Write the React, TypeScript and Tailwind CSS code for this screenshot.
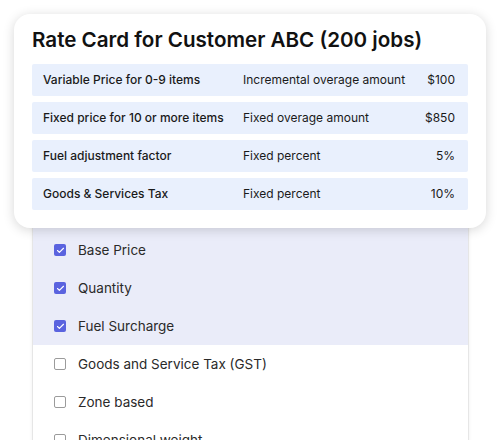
import { Check } from "lucide-react";

const rates = [
  { name: "Variable Price for 0-9 items", type: "Incremental overage amount", value: "$100" },
  { name: "Fixed price for 10 or more items", type: "Fixed overage amount", value: "$850" },
  { name: "Fuel adjustment factor", type: "Fixed percent", value: "5%" },
  { name: "Goods & Services Tax", type: "Fixed percent", value: "10%" },
];

const charges = [
  { label: "Base Price", checked: true },
  { label: "Quantity", checked: true },
  { label: "Fuel Surcharge", checked: true },
  { label: "Goods and Service Tax (GST)", checked: false },
  { label: "Zone based", checked: false },
  { label: "Dimensional weight", checked: false },
];

function ChargeRow({ label, checked }: { label: string; checked: boolean }) {
  return (
    <div className="flex h-[38px] items-center gap-3 pl-[21px]">
      {checked ? (
        <span className="flex h-3 w-3 items-center justify-center rounded-[2px] bg-[#5a63df]">
          <Check size={9} strokeWidth={3} className="text-white" />
        </span>
      ) : (
        <span className="h-3 w-3 rounded-[2px] border-[1.5px] border-[#9b9b9b] bg-white" />
      )}
      <span className="text-[13.5px] text-[#2a2a2a]">{label}</span>
    </div>
  );
}

export default function App() {
  const picked = charges.filter((c) => c.checked);
  const rest = charges.filter((c) => !c.checked);

  return (
    <div className="relative h-[440px] w-[500px] overflow-hidden bg-white font-['Inter',sans-serif]">
      {/* list behind the card */}
      <div className="ml-[32px] mt-[200px] w-[437px] border-x border-[#e6e6e6] bg-white shadow-[0_0_4px_rgba(0,0,0,0.06)]">
        <div className="bg-[#eaecf9] pt-[31px]">
          {picked.map((c) => (
            <ChargeRow key={c.label} {...c} />
          ))}
        </div>
        {rest.map((c) => (
          <ChargeRow key={c.label} {...c} />
        ))}
      </div>

      {/* rate card */}
      <div className="absolute left-[14px] top-[14px] w-[472px] rounded-2xl bg-white px-[18px] pb-[18px] pt-[12px] shadow-[0_2px_12px_rgba(0,0,0,0.16)]">
        <h1 className="text-[20.6px] font-semibold leading-7 text-[#111]">
          Rate Card for Customer ABC (200 jobs)
        </h1>
        <div className="mt-[10px] flex flex-col gap-[6px]">
          {rates.map((r) => (
            <div
              key={r.name}
              className="grid h-8 grid-cols-[200px_1fr_auto] items-center rounded-[2px] bg-[#e9f0fd] pl-[11px] pr-[13px] text-[12px] text-[#1a1a1a]"
            >
              <span className="font-medium">{r.name}</span>
              <span>{r.type}</span>
              <span>{r.value}</span>
            </div>
          ))}
        </div>
      </div>
    </div>
  );
}
